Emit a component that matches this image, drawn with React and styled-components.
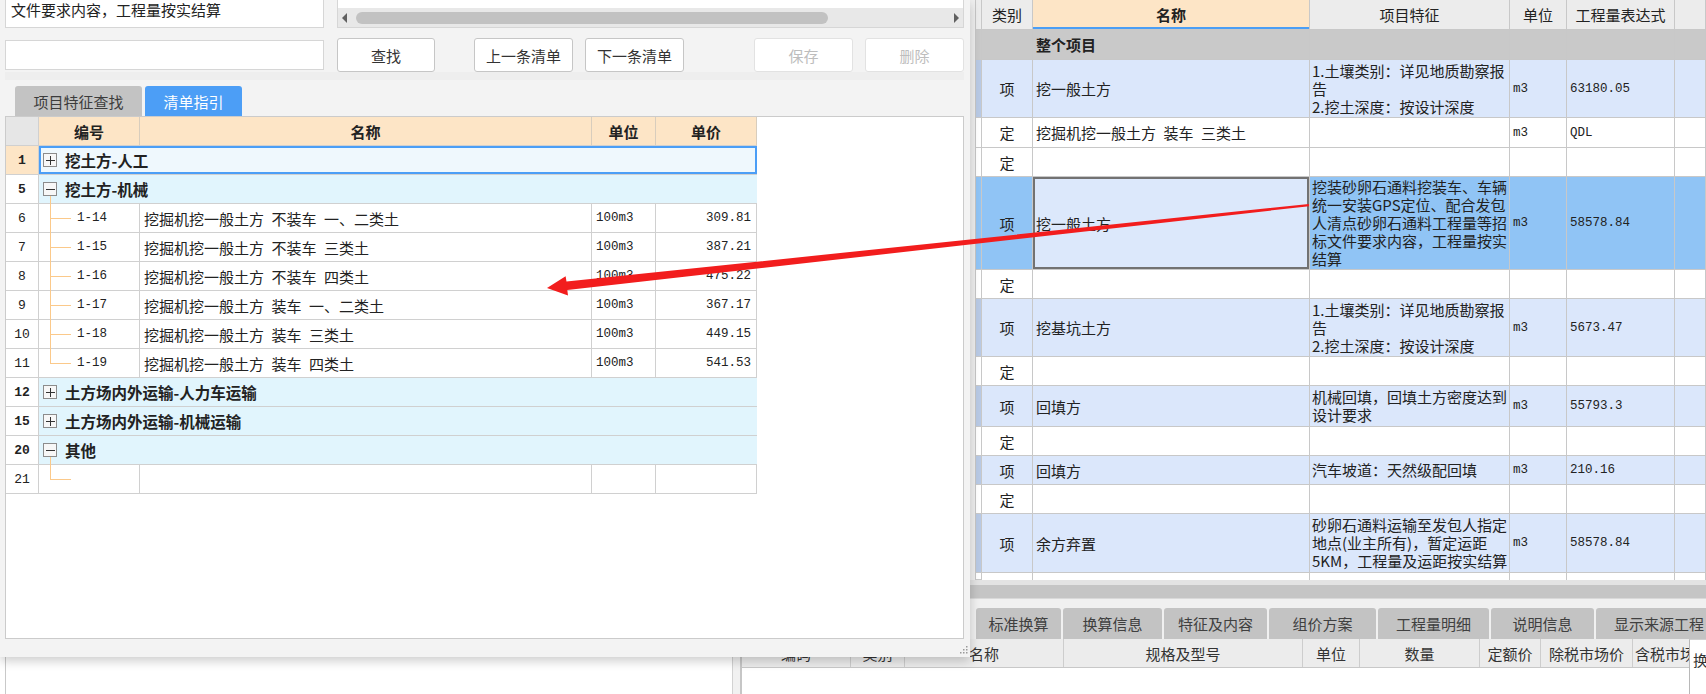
import React from 'react'
import styled, { createGlobalStyle, css } from 'styled-components'

const CJK = `"Noto Sans CJK SC", "Noto Sans", sans-serif`
const MONO = `"Liberation Mono", "Noto Sans CJK SC", monospace`

const GlobalStyle = createGlobalStyle`
  * { box-sizing: border-box; }
  html, body { margin: 0; padding: 0; }
  body {
    width: 1706px;
    height: 694px;
    overflow: hidden;
    background: #fff;
    font-family: ${CJK};
    font-size: 15px;
    color: #222;
  }
`

// SimSun-like half-width gaps between words
const gap = s => s.replace(/ /g, '\u2002')

/* ---------- background window ---------- */

const Page = styled.div`
  position: relative;
  width: 1706px;
  height: 694px;
  overflow: hidden;
  display: flex;
  background: #fff;
`

const LeftPane = styled.div`
  width: 727px;
  margin-left: 5px;
  border-left: 1px solid #c9c9c9;
  background: #fff;
`

const Splitter = styled.div`
  width: 9px;
  background: #f1f1f1;
  border-left: 1px solid #d2d2d2;
  border-right: 1px solid #c6c6c6;
`

const RightPane = styled.div`
  flex: 1;
  min-width: 0;
  display: flex;
  flex-direction: column;
`

const UpperArea = styled.div`
  height: 580px;
  display: flex;
`

const Gutter = styled.div`
  width: 235px;
  background: #efefef;
  border-right: 1px solid #c6c6c6;
`

const BillGrid = styled.div`
  flex: 1;
  min-width: 0;
  display: flex;
  flex-direction: column;
  overflow: hidden;
`

const rowBg = {
  head: '#ececec',
  root: '#c9c9c9',
  item: '#dbe7fb',
  current: '#90c4f5',
  quota: '#ffffff',
}

const BillRow = styled.div`
  display: grid;
  grid-template-columns: 6px 51px 277px 200px 57px 108px 1fr;
  height: ${p => p.$h}px;
  flex-shrink: 0;
  background: ${p => rowBg[p.$kind]};
`

const Mark = styled.div`
  border-right: 1px solid #c8c8c8;
  border-bottom: 1px solid #c8c8c8;
  background: ${p => (p.$kind === 'item' ? '#b8c9e4' : 'transparent')};
`

const BillCell = styled.div`
  display: flex;
  align-items: center;
  justify-content: ${p => (p.$center ? 'center' : 'flex-start')};
  padding: 0 3px;
  overflow: hidden;
  white-space: nowrap;
  border-right: 1px solid #c8c8c8;
  border-bottom: ${p => (p.$open ? 'none' : '1px solid #c8c8c8')};
  font-size: 15px;
  color: #222;
  ${p => p.$mono && css`
    font-family: ${MONO};
    font-size: 12.5px;
  `}
  ${p => p.$bold && css`font-weight: 700;`}
  ${p => p.$active && css`
    background: #fde5c6;
    font-weight: 700;
    box-shadow: inset 0 -2px 0 #4a9ef5;
  `}
  ${p => p.$focus && css`
    background: #dce8fb;
    box-shadow: inset 0 0 0 2px #727272;
  `}
`

const Feature = styled.div`
  font-size: 15px;
  line-height: 18px;
  white-space: nowrap;
`

const ScrollTrack = styled.div`
  height: 18px;
  background: #c5c5c5;
  border-top: 5px solid #e3e3e3;
`

const TabStrip = styled.div`
  height: 41px;
  display: flex;
  align-items: flex-end;
  gap: 2px;
  padding-left: 235px;
  background: #f0f0f0;
  border-top: 1px solid #d9d9d9;
  overflow: hidden;
`

const BottomTab = styled.div`
  width: ${p => p.$w}px;
  flex-shrink: 0;
  height: 31px;
  display: flex;
  align-items: center;
  justify-content: center;
  background: #c3c3c3;
  border-radius: 3px 3px 0 0;
  color: #404040;
  font-size: 15px;
  white-space: nowrap;
`

const LowerSection = styled.div`
  flex: 1;
  display: flex;
`

const MaterialGrid = styled.div`
  width: 948px;
  display: flex;
  flex-direction: column;
  border-left: 1px solid #c6c6c6;
`

const MaterialHead = styled.div`
  height: 29px;
  display: grid;
  grid-template-columns: 109px 54px 159px 239px 57px 120px 61px 92px 57px;
  background: #ececec;
  border-bottom: 1px solid #c8c8c8;
`

const HeadCell = styled.div`
  display: flex;
  align-items: center;
  justify-content: ${p => (p.$left ? 'flex-start' : 'center')};
  padding-left: ${p => (p.$left ? '2px' : '0')};
  border-right: 1px solid #cdcdcd;
  overflow: hidden;
  white-space: nowrap;
  font-size: 15px;
  color: #333;
`

const MaterialBody = styled.div`
  flex: 1;
  background: #fff;
`

const SidePanel = styled.div`
  flex: 1;
  background: #fff;
  border-left: 1px solid #b8b8b8;
  border-top: 1px solid #d0d0d0;
  padding: 9px 0 0 3px;
  overflow: hidden;
  white-space: nowrap;
  font-size: 15px;
  color: #333;
`

/* ---------- floating dialog ---------- */

const Dialog = styled.div`
  position: absolute;
  left: 0;
  top: 0;
  width: 970px;
  height: 657px;
  z-index: 2;
  display: flex;
  flex-direction: column;
  padding: 0 6px 18px 5px;
  background: #f3f3f3;
  box-shadow: 0 4px 10px rgba(0, 0, 0, 0.2);
`

const TopRow = styled.div`
  height: 28px;
  display: flex;
  gap: 13px;
`

const Memo = styled.div`
  width: 319px;
  background: #fff;
  border: 1px solid #d6d6d6;
  border-top: none;
  padding: 1px 0 0 5px;
  font-size: 15px;
  line-height: 18px;
  color: #222;
  white-space: nowrap;
  overflow: hidden;
`

const Preview = styled.div`
  flex: 1;
  display: flex;
  flex-direction: column;
  justify-content: flex-end;
  background: #fff;
  border: 1px solid #d6d6d6;
  border-top: none;
`

const HBar = styled.div`
  height: 19px;
  display: flex;
  align-items: center;
  background: #e8e8e8;
  padding: 0 4px;
`

const Arrow = styled.span`
  width: 0;
  height: 0;
  border-top: 5px solid transparent;
  border-bottom: 5px solid transparent;
  ${p => (p.$right
    ? css`border-left: 5px solid #606060; margin-left: auto;`
    : css`border-right: 5px solid #606060;`)}
`

const Thumb = styled.span`
  width: 472px;
  height: 12px;
  margin-left: 9px;
  border-radius: 6px;
  background: #c2c2c2;
`

const ActionRow = styled.div`
  height: 34px;
  margin-top: 10px;
  display: flex;
  align-items: center;
`

const SearchBox = styled.div`
  width: 319px;
  height: 30px;
  background: #fff;
  border: 1px solid #d6d6d6;
`

const Button = styled.button`
  width: ${p => p.$w}px;
  height: 34px;
  margin-left: ${p => p.$gap}px;
  padding: 0;
  background: #fff;
  border: 1px solid ${p => (p.$off ? '#e2e2e2' : '#c6c6c6')};
  border-radius: 3px;
  font-family: ${CJK};
  font-size: 15px;
  color: ${p => (p.$off ? '#bdbdbd' : '#333')};
`

const Band = styled.div`
  height: 8px;
  background: #eeeeee;
`

const TabsRow = styled.div`
  height: 36px;
  display: flex;
  align-items: flex-end;
  gap: 3px;
  padding-left: 10px;
`

const DialogTab = styled.div`
  width: ${p => p.$w}px;
  height: 30px;
  display: flex;
  align-items: center;
  justify-content: center;
  border-radius: 3px 3px 0 0;
  font-size: 15px;
  background: ${p => (p.$on ? '#4c9ef6' : '#c3c3c3')};
  color: ${p => (p.$on ? '#fff' : '#3c3c3c')};
`

const ListPanel = styled.div`
  flex: 1;
  background: #fff;
  border: 1px solid #cbcbcb;
`

const GuideRow = styled.div`
  display: grid;
  grid-template-columns: 33px 101px 452px 64px 101px;
  height: 29px;
`

const NumCell = styled.div`
  display: flex;
  align-items: center;
  justify-content: center;
  border-right: 1px solid #d0d0d0;
  border-bottom: 1px solid #d0d0d0;
  font-family: ${MONO};
  font-size: 13px;
  color: #222;
  background: ${p => (p.$head ? '#e6e6e6' : p.$sel ? '#fde5c6' : '#fff')};
  ${p => p.$bold && css`font-weight: 700;`}
`

const HeadTitle = styled.div`
  display: flex;
  align-items: center;
  justify-content: center;
  background: #fde5c6;
  border-right: 1px solid #d8cdbd;
  border-bottom: 1px solid #d0d0d0;
  font-weight: 700;
  font-size: 15px;
  color: #222;
`

const GroupCell = styled.div`
  grid-column: 2 / 6;
  display: flex;
  align-items: center;
  padding-left: 4px;
  font-weight: 700;
  font-size: 15.5px;
  color: #222;
  background: ${p => (p.$sel ? '#eff8fd' : '#e1f5fd')};
  border-bottom: 1px solid #d0d0d0;
  ${p => p.$sel && css`box-shadow: inset 0 0 0 2px #4b9ef6;`}
`

const ToggleBox = styled.span`
  position: relative;
  width: 14px;
  height: 14px;
  margin-right: 8px;
  display: inline-flex;
  align-items: center;
  justify-content: center;
  border: 1px solid #8c8c8c;
  background: #f7f7f7;
  ${p => p.$open && css`
    &::after {
      content: '';
      position: absolute;
      left: 6px;
      top: 13px;
      height: 9px;
      border-left: 1px solid #fbc98a;
    }
  `}
`

const CodeCell = styled.div`
  position: relative;
  display: flex;
  align-items: center;
  padding-left: 38px;
  border-right: 1px solid #d0d0d0;
  border-bottom: 1px solid #d0d0d0;
  font-family: ${MONO};
  font-size: 12.5px;
  color: #222;
  &::before {
    content: '';
    position: absolute;
    left: 11px;
    top: -1px;
    height: ${p => (p.$last ? '15px' : 'calc(100% + 1px)')};
    border-left: 1px solid #fbc98a;
  }
  &::after {
    content: '';
    position: absolute;
    left: 11px;
    top: 14px;
    width: 21px;
    border-top: 1px solid #fbc98a;
  }
`

const Cell = styled.div`
  display: flex;
  align-items: center;
  justify-content: ${p => (p.$right ? 'flex-end' : 'flex-start')};
  padding: ${p => (p.$right ? '0 5px 0 0' : '0 0 0 4px')};
  border-right: 1px solid #d0d0d0;
  border-bottom: 1px solid #d0d0d0;
  white-space: nowrap;
  overflow: hidden;
  font-size: 15px;
  color: #222;
  ${p => p.$mono && css`
    font-family: ${MONO};
    font-size: 12.5px;
  `}
`

const Grip = styled.svg`
  position: absolute;
  right: 2px;
  bottom: 3px;
`

const Overlay = styled.svg`
  position: absolute;
  left: 0;
  top: 0;
  z-index: 3;
  pointer-events: none;
`

/* ---------- data ---------- */

const billRows = [
  { kind: 'root', h: 30, name: '整个项目' },
  { kind: 'item', h: 58, type: '项', name: '挖一般土方', feat: ['1.土壤类别：详见地质勘察报', '告', '2.挖土深度：按设计深度'], unit: 'm3', qty: '63180.05' },
  { kind: 'quota', h: 30, type: '定', name: gap('挖掘机挖一般土方 装车 三类土'), unit: 'm3', qty: 'QDL' },
  { kind: 'quota', h: 29, type: '定' },
  { kind: 'current', h: 93, type: '项', name: '挖一般土方', feat: ['挖装砂卵石通料挖装车、车辆', '统一安装GPS定位、配合发包', '人清点砂卵石通料工程量等招', '标文件要求内容，工程量按实', '结算'], unit: 'm3', qty: '58578.84' },
  { kind: 'quota', h: 29, type: '定' },
  { kind: 'item', h: 58, type: '项', name: '挖基坑土方', feat: ['1.土壤类别：详见地质勘察报', '告', '2.挖土深度：按设计深度'], unit: 'm3', qty: '5673.47' },
  { kind: 'quota', h: 29, type: '定' },
  { kind: 'item', h: 41, type: '项', name: '回填方', feat: ['机械回填，回填土方密度达到', '设计要求'], unit: 'm3', qty: '55793.3' },
  { kind: 'quota', h: 29, type: '定' },
  { kind: 'item', h: 29, type: '项', name: '回填方', feat: ['汽车坡道：天然级配回填'], unit: 'm3', qty: '210.16' },
  { kind: 'quota', h: 29, type: '定' },
  { kind: 'item', h: 59, type: '项', name: '余方弃置', feat: ['砂卵石通料运输至发包人指定', '地点(业主所有)，暂定运距', '5KM，工程量及运距按实结算'], unit: 'm3', qty: '58578.84' },
]

const bottomTabs = [
  ['标准换算', 85], ['换算信息', 99], ['特征及内容', 103], ['组价方案', 107],
  ['工程量明细', 111], ['说明信息', 103], ['显示来源工程', 126],
]

const materialCols = ['编码', '类别', '名称', '规格及型号', '单位', '数量', '定额价', '除税市场价', '含税市场价']

const guideRows = [
  { no: 1, group: '挖土方-人工', sel: true },
  { no: 5, group: '挖土方-机械', open: true },
  { no: 6, code: '1-14', name: '挖掘机挖一般土方 不装车 一、二类土', unit: '100m3', price: '309.81' },
  { no: 7, code: '1-15', name: '挖掘机挖一般土方 不装车 三类土', unit: '100m3', price: '387.21' },
  { no: 8, code: '1-16', name: '挖掘机挖一般土方 不装车 四类土', unit: '100m3', price: '475.22' },
  { no: 9, code: '1-17', name: '挖掘机挖一般土方 装车 一、二类土', unit: '100m3', price: '367.17' },
  { no: 10, code: '1-18', name: '挖掘机挖一般土方 装车 三类土', unit: '100m3', price: '449.15' },
  { no: 11, code: '1-19', name: '挖掘机挖一般土方 装车 四类土', unit: '100m3', price: '541.53', last: true },
  { no: 12, group: '土方场内外运输-人力车运输' },
  { no: 15, group: '土方场内外运输-机械运输' },
  { no: 20, group: '其他', open: true },
  { no: 21, code: '', name: '', unit: '', price: '', last: true },
]

function Toggle({ open }) {
  return (
    <ToggleBox $open={open}>
      <svg width="9" height="9" viewBox="0 0 9 9">
        <path d={open ? 'M0 4.5H9' : 'M0 4.5H9M4.5 0V9'} stroke="#333" strokeWidth="1" />
      </svg>
    </ToggleBox>
  )
}

function BillLine({ row }) {
  const { kind, h, type, name, feat, unit, qty } = row
  return (
    <BillRow $kind={kind} $h={h}>
      <Mark $kind={kind} />
      <BillCell $center>{type}</BillCell>
      <BillCell $bold={kind === 'root'} $focus={kind === 'current'}>{name}</BillCell>
      <BillCell style={{ padding: '0 2px' }}>
        <div>{(feat || []).map((l, i) => <Feature key={i}>{l}</Feature>)}</div>
      </BillCell>
      <BillCell $mono>{unit}</BillCell>
      <BillCell $mono>{qty}</BillCell>
      <BillCell />
    </BillRow>
  )
}

export default function App() {
  return (
    <Page>
      <GlobalStyle />

      <LeftPane />
      <Splitter />
      <RightPane>
        <UpperArea>
          <Gutter />
          <BillGrid>
            <BillRow $kind="head" $h={30}>
              <Mark />
              <BillCell $center>类别</BillCell>
              <BillCell $center $active>名称</BillCell>
              <BillCell $center>项目特征</BillCell>
              <BillCell $center>单位</BillCell>
              <BillCell $center>工程量表达式</BillCell>
              <BillCell />
            </BillRow>
            {billRows.map((r, i) => <BillLine key={i} row={r} />)}
            <BillRow $kind="quota" $h={7}>
              <Mark />
              <BillCell $open />
              <BillCell $open />
              <BillCell $open />
              <BillCell $open />
              <BillCell $open />
              <BillCell $open />
            </BillRow>
          </BillGrid>
        </UpperArea>
        <ScrollTrack />
        <TabStrip>
          {bottomTabs.map(([t, w]) => <BottomTab key={t} $w={w}>{t}</BottomTab>)}
        </TabStrip>
        <LowerSection>
          <MaterialGrid>
            <MaterialHead>
              {materialCols.map((c, i) => (
                <HeadCell key={c} $left={i === materialCols.length - 1}>{c}</HeadCell>
              ))}
            </MaterialHead>
            <MaterialBody />
          </MaterialGrid>
          <SidePanel>换</SidePanel>
        </LowerSection>
      </RightPane>

      <Dialog>
        <TopRow>
          <Memo>文件要求内容，工程量按实结算</Memo>
          <Preview>
            <HBar>
              <Arrow />
              <Thumb />
              <Arrow $right />
            </HBar>
          </Preview>
        </TopRow>

        <ActionRow>
          <SearchBox />
          <Button $w={98} $gap={13}>查找</Button>
          <Button $w={99} $gap={39}>上一条清单</Button>
          <Button $w={99} $gap={12}>下一条清单</Button>
          <Button $w={99} $gap={70} $off>保存</Button>
          <Button $w={99} $gap={12} $off>删除</Button>
        </ActionRow>

        <Band />

        <TabsRow>
          <DialogTab $w={127}>项目特征查找</DialogTab>
          <DialogTab $w={97} $on>清单指引</DialogTab>
        </TabsRow>

        <ListPanel>
          <GuideRow>
            <NumCell $head />
            <HeadTitle>编号</HeadTitle>
            <HeadTitle>名称</HeadTitle>
            <HeadTitle>单位</HeadTitle>
            <HeadTitle>单价</HeadTitle>
          </GuideRow>
          {guideRows.map(r => (
            <GuideRow key={r.no}>
              <NumCell $bold={!!r.group} $sel={r.sel}>{r.no}</NumCell>
              {r.group ? (
                <GroupCell $sel={r.sel}>
                  <Toggle open={r.open} />
                  {r.group}
                </GroupCell>
              ) : (
                <>
                  <CodeCell $last={r.last}>{r.code}</CodeCell>
                  <Cell>{gap(r.name)}</Cell>
                  <Cell $mono>{r.unit}</Cell>
                  <Cell $mono $right>{r.price}</Cell>
                </>
              )}
            </GuideRow>
          ))}
        </ListPanel>

        <Grip width="9" height="9" viewBox="0 0 9 9">
          {[[7, 1], [7, 4], [4, 4], [7, 7], [4, 7], [1, 7]].map(([x, y]) => (
            <rect key={`${x}-${y}`} x={x} y={y} width="1.5" height="1.5" fill="#9a9a9a" />
          ))}
        </Grip>
      </Dialog>

      <Overlay width="1706" height="694" viewBox="0 0 1706 694">
        <polygon
          points="1308.9,204 566.5,281.6 565.6,276.2 547,288 568,295.4 567.3,290 1309.1,206.2"
          fill="#f21d1d"
        />
      </Overlay>
    </Page>
  )
}
